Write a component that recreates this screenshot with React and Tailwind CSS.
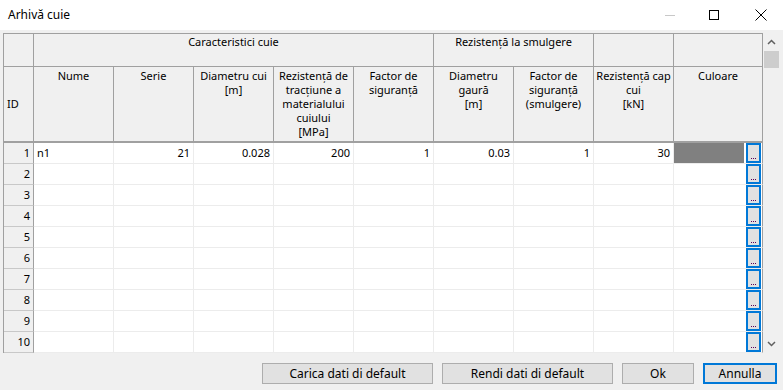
import React from 'react';

const FONT = "font-['Noto_Sans','Liberation_Sans',sans-serif]";

const subHeaders = [
  { label: ['ID'], id: true },
  { label: ['Nume'] },
  { label: ['Serie'] },
  { label: ['Diametru cui', '[m]'] },
  { label: ['Rezistență de', 'tracțiune a', 'materialului', 'cuiului', '[MPa]'] },
  { label: ['Factor de', 'siguranță'] },
  { label: ['Diametru', 'gaură', '[m]'] },
  { label: ['Factor de', 'siguranță', '(smulgere)'] },
  { label: ['Rezistență cap', 'cui', '[kN]'] },
  { label: ['Culoare'] },
];

const rows = [
  { nume: 'n1', serie: '21', diam: '0.028', rez: '200', factor: '1', gaura: '0.03', fsm: '1', cap: '30', color: true },
  ...Array.from({ length: 10 }, () => ({})),
];

// small "..." button next to the colour cell
const EllipsisButton = () => (
  <div className="w-[15px] h-[20px] border-2 border-[#0078d7] bg-[#e1e1e1] flex items-end justify-center pb-[2px]">
    <div className="flex gap-[1px]">
      <span className="w-px h-px bg-[#5a005a]"></span>
      <span className="w-px h-px bg-[#5a005a]"></span>
      <span className="w-px h-px bg-[#5a005a]"></span>
    </div>
  </div>
);

const BodyRow = ({ row, index }) => {
  const cell = 'h-[21px] border-r border-b border-[#ececec] bg-white flex items-center px-[3px]';
  const num = `${cell} justify-end`;
  return (
    <>
      <div className="h-[21px] border-r border-b border-r-[#a0a0a0] border-b-[#c8c8c8] bg-[#f0f0f0] flex items-center justify-end pr-[3px]">
        {index <= 10 ? index : ''}
      </div>
      <div className={cell}>{row.nume}</div>
      <div className={num}>{row.serie}</div>
      <div className={num}>{row.diam}</div>
      <div className={num}>{row.rez}</div>
      <div className={num}>{row.factor}</div>
      <div className={num}>{row.gaura}</div>
      <div className={num}>{row.fsm}</div>
      <div className={num}>{row.cap}</div>
      <div className="h-[21px] border-r border-b border-r-[#a0a0a0] border-b-[#ececec] bg-white flex items-start">
        <div className={`h-[20px] w-[70px] ${row.color ? 'bg-[#808080]' : 'bg-white'}`}></div>
        <div className="ml-[2px]">
          <EllipsisButton />
        </div>
      </div>
    </>
  );
};

const App = () => {
  const head1 = 'h-[33px] border-r border-b border-[#a0a0a0] bg-[#f0f0f0] text-center pt-[1px] leading-[14px]';
  const btn = 'h-[21px] border border-[#adadad] bg-[#e1e1e1] leading-none whitespace-nowrap px-0';
  return (
    <div className={`w-[783px] h-[390px] bg-[#f0f0f0] text-[11px] text-black ${FONT} overflow-hidden`}>
      {/* title bar */}
      <div className="h-[30px] bg-white flex items-center">
        <span className="ml-[8px] text-[12px] flex-1">Arhivă cuie</span>
        <div className="w-[10px] h-px bg-[#c8c8c8] mr-[34px]"></div>
        <div className="w-[10px] h-[10px] border border-black mr-[36px]"></div>
        <svg width="12" height="12" viewBox="0 0 12 12" className="mr-[16px]">
          <path d="M0.5 0.5 L11.5 11.5 M11.5 0.5 L0.5 11.5" stroke="#000" strokeWidth="1" />
        </svg>
      </div>

      {/* grid + scrollbar */}
      <div className="flex pt-[3px] pl-[3px] h-[323px]">
        <div className="w-[760px] h-[320px] border-l border-t border-[#a0a0a0] overflow-hidden">
          <div className="grid grid-cols-[30px_repeat(8,80px)_89px]">
            <div className={head1}></div>
            <div className={`${head1} col-span-5`}>Caracteristici cuie</div>
            <div className={`${head1} col-span-2`}>Rezistență la smulgere</div>
            <div className={head1}></div>
            <div className={head1}></div>

            {subHeaders.map((h, i) => (
              <div
                key={i}
                className={`h-[76px] border-r border-b-2 border-[#a0a0a0] bg-[#f0f0f0] leading-[14px] ${
                  h.id ? 'flex items-center pl-[3px]' : 'text-center pt-[2px]'
                }`}
              >
                {h.label.map((l, j) => (
                  <div key={j}>{l}</div>
                ))}
              </div>
            ))}

            {rows.map((row, i) => (
              <BodyRow key={i} row={row} index={i + 1} />
            ))}
          </div>
        </div>

        {/* scrollbar */}
        <div className="w-[17px] h-[320px] bg-[#f0f0f0] flex flex-col items-center">
          <div className="h-[18px] flex items-center justify-center">
            <svg width="9" height="6" viewBox="0 0 9 6">
              <path d="M1 5 L4.5 1.5 L8 5" stroke="#606060" strokeWidth="1.5" fill="none" />
            </svg>
          </div>
          <div className="w-[15px] h-[17px] bg-[#cdcdcd]"></div>
          <div className="flex-1"></div>
          <div className="h-[18px] flex items-center justify-center">
            <svg width="9" height="6" viewBox="0 0 9 6">
              <path d="M1 1 L4.5 4.5 L8 1" stroke="#606060" strokeWidth="1.5" fill="none" />
            </svg>
          </div>
        </div>
      </div>

      {/* buttons */}
      <div className="flex justify-end gap-[9px] pr-[6px] pt-[10px] text-[12px]">
        <button className={`w-[171px] ${btn}`}>Carica dati di default</button>
        <button className={`w-[171px] ${btn}`}>Rendi dati di default</button>
        <button className={`w-[72px] ${btn}`}>Ok</button>
        <button className="w-[74px] h-[21px] border-2 border-[#0078d7] bg-[#e1e1e1] leading-none whitespace-nowrap px-0">
          Annulla
        </button>
      </div>
    </div>
  );
};

export default App;
